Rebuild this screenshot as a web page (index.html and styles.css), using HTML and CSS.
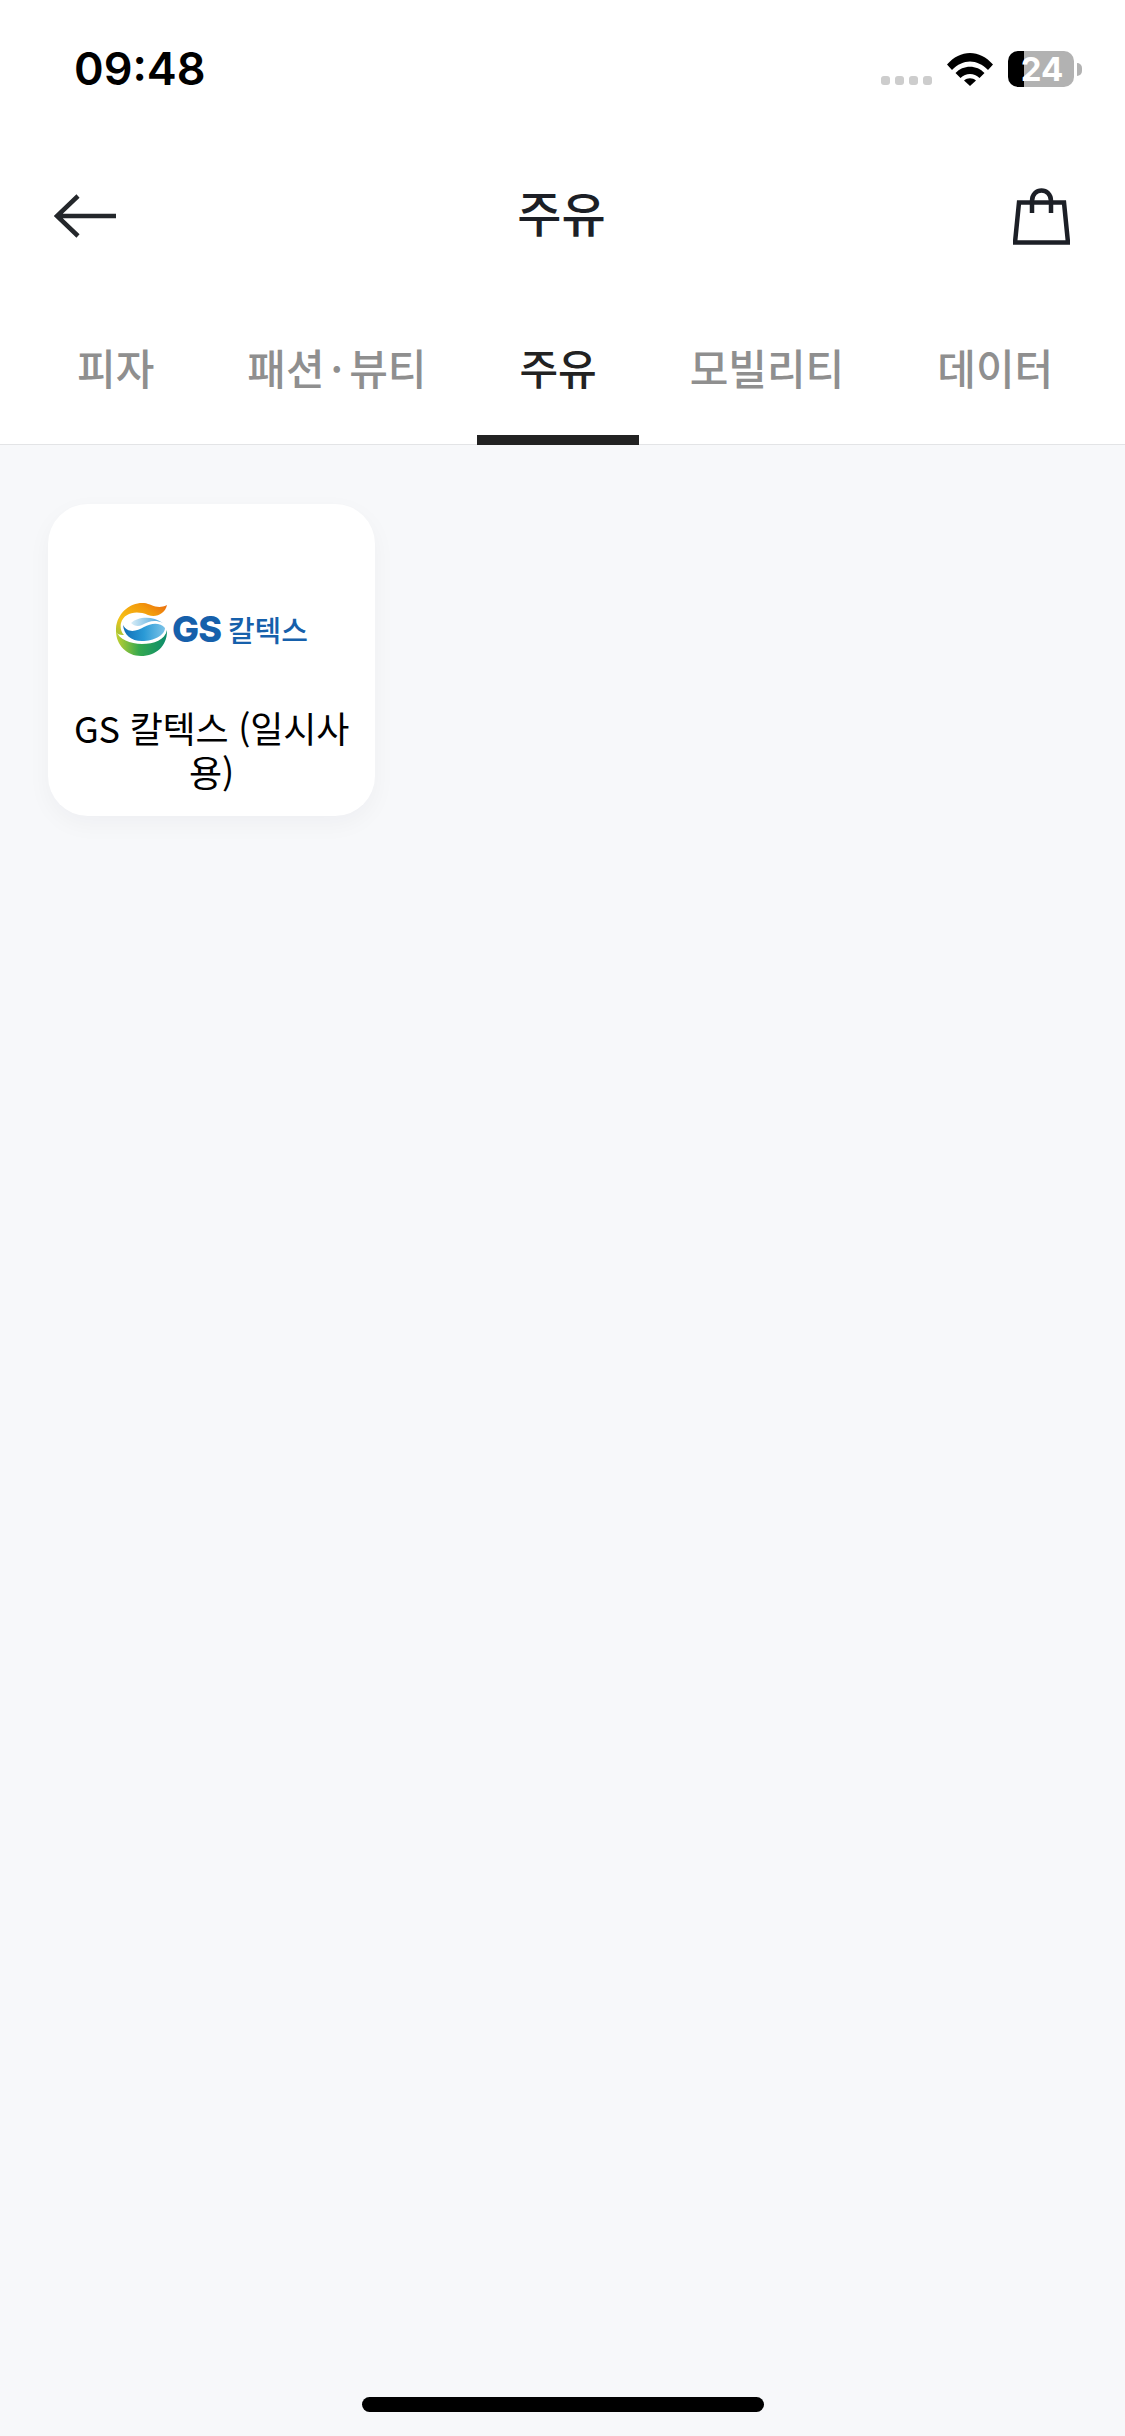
FILE: index.html
```html
<!DOCTYPE html>
<html lang="ko">
<head>
  <meta charset="utf-8">
  <title>주유</title>
  <link rel="stylesheet" href="styles.css">
</head>
<body>
  <div class="screen">
    <div class="status-bar">
      <span class="time">09:48</span>
      <div class="status-icons">
        <div class="signal"><i></i><i></i><i></i><i></i></div>
        <svg class="wifi" width="46" height="34" viewBox="0 0 46 34">
          <path d="M0 12.5 C13 -3 33 -3 46 12.5 L41 18 C30 6.500 16 6.500 5 18 Z" fill="#000"/>
          <path d="M8.500 21 C16 12.500 30 12.500 37.500 21 L32.500 26 C27 20.500 19 20.500 13.500 26 Z" fill="#000"/>
          <path d="M17 28.500 C20.500 25.500 25.500 25.500 29 28.500 L23 34 Z" fill="#000"/>
        </svg>
        <div class="battery">24</div>
        <div class="battery-nub"></div>
      </div>
    </div>

    <header class="top-bar">
      <svg class="back" width="62" height="44" viewBox="0 0 62 44">
        <path d="M24 2 L3 22 L24 42 M3 22 H62" fill="none" stroke="#24272b" stroke-width="4.500"/>
      </svg>
      <h1 class="title">주유</h1>
      <svg class="bag" width="57" height="57" viewBox="0 0 57 57">
        <path d="M6 14.500 H51 L55 54.500 H2 Z" fill="none" stroke="#1c1f26" stroke-width="4.500"/>
        <path d="M19 25 V13 C19 -1 38 -1 38 13 V25" fill="none" stroke="#1c1f26" stroke-width="4.500"/>
      </svg>
    </header>

    <nav class="tabs">
      <a class="tab">피자</a>
      <a class="tab">패션<span class="tab-dot">·</span>뷰티</a>
      <a class="tab active">주유</a>
      <a class="tab">모빌리티</a>
      <a class="tab">데이터</a>
    </nav>

    <main class="content">
      <div class="card">
        <div class="logo">
          <svg class="logo-mark" width="52" height="54" viewBox="0 0 52 54">
            <defs>
              <linearGradient id="topGrad" x1="0" y1="1" x2="1" y2="0">
                <stop offset="0" stop-color="#9cc53a"/>
                <stop offset="0.3" stop-color="#f6c218"/>
                <stop offset="0.7" stop-color="#f39a0c"/>
                <stop offset="1" stop-color="#e8660f"/>
              </linearGradient>
              <linearGradient id="bottomGrad" x1="0" y1="0" x2="1" y2="0">
                <stop offset="0" stop-color="#c3d02f"/>
                <stop offset="0.45" stop-color="#35a94f"/>
                <stop offset="1" stop-color="#0c8c6c"/>
              </linearGradient>
              <linearGradient id="waveGrad" x1="0" y1="0" x2="1" y2="0">
                <stop offset="0" stop-color="#0f6db6"/>
                <stop offset="0.5" stop-color="#2a9ad6"/>
                <stop offset="1" stop-color="#7cc3e8"/>
              </linearGradient>
              <linearGradient id="lightGrad" x1="0" y1="0" x2="1" y2="0">
                <stop offset="0" stop-color="#d8edf7"/>
                <stop offset="1" stop-color="#3f9fd8"/>
              </linearGradient>
            </defs>
            <path d="M0 30 C-1 12 14 0 28 1 C36 2 41 8 51 3 C49 12 40 16 32 13 C20 8 8 11 5 21 C4 25 5 30 8 33 C3 33 1 32 0 30 Z" fill="url(#topGrad)"/>
            <path d="M0 29 C3 37 14 42 26 42 C38 42 49 38 51 28 L51 29 C51 44 40 54 25 54 C11 54 0 43 0 29 Z" fill="url(#bottomGrad)"/>
            <path d="M7 23 C12 32 21 29 28 25 C35 21 44 20 49 26 C49 33 38 39 26 39 C15 39 8 33 7 23 Z" fill="url(#waveGrad)"/>
            <path d="M15 21 C21 15 36 13 47 21 C38 17 32 20 26 23 C22 25 18 24 15 21 Z" fill="url(#lightGrad)"/>
          </svg>
          <span class="logo-gs">GS</span>
          <span class="logo-name">칼텍스</span>
        </div>
        <div class="card-label">GS 칼텍스 (일시사용)</div>
      </div>
    </main>

    <div class="home-bar"></div>
  </div>
</body>
</html>
```

FILE: styles.css
```css
* {
  box-sizing: border-box;
}

body {
  margin: 0;
  font-family: "Noto Sans CJK KR", "Noto Sans", sans-serif;
  background-color: #f7f8fa;
}

.screen {
  position: relative;
  width: 1125px;
  height: 2436px;
  display: flex;
  flex-direction: column;
  overflow: hidden;
}

/* Status bar */
.status-bar {
  height: 136px;
  background-color: #fff;
  display: flex;
  justify-content: space-between;
  padding: 43px 43px 0 74px;
}

.time {
  font-family: Inter, sans-serif;
  font-size: 45px;
  font-weight: 600;
  line-height: 52px;
  color: #000;
}

.status-icons {
  display: flex;
  align-items: flex-start;
  padding-top: 8px;
}

.signal {
  display: flex;
  gap: 5px;
  margin-top: 25px;
  margin-right: 15px;
}

.signal i {
  width: 9px;
  height: 9px;
  border-radius: 3px;
  background-color: #cdcdcd;
}

.wifi {
  margin-top: 1px;
  margin-right: 15px;
}

.battery {
  width: 66px;
  height: 36px;
  border-radius: 10px;
  background: linear-gradient(90deg, #000 16px, #b2b2b2 16px);
  color: #fff;
  font-family: Inter, sans-serif;
  font-size: 33px;
  font-weight: 700;
  line-height: 36px;
  text-align: center;
  padding-left: 2px;
}

.battery-nub {
  width: 5px;
  height: 13px;
  margin-top: 12px;
  margin-left: 3px;
  border-radius: 0 6px 6px 0;
  background-color: #b2b2b2;
}

/* Top bar */
.top-bar {
  height: 154px;
  background-color: #fff;
  display: flex;
  align-items: center;
  justify-content: space-between;
  padding: 6px 55px 0 54px;
}

.title {
  margin: 0 6px 10px 0;
  font-size: 48px;
  font-weight: 500;
  line-height: 60px;
  color: #1c1f26;
}

/* Tabs */
.tabs {
  height: 155px;
  background-color: #fff;
  border-bottom: 1px solid #e3e4e6;
  display: flex;
  gap: 9px;
  padding-left: 35px;
}

.tab {
  padding: 0 42px;
  font-size: 42px;
  font-weight: 500;
  line-height: 154px;
  white-space: nowrap;
  color: #8f8f8f;
  height: 155px;
}

.tab.active {
  color: #222;
  border-bottom: 10px solid #222;
}

.tab-dot {
  margin: 0 6px;
}

/* Content */
.content {
  flex: 1;
  padding: 59px 48px;
}

.card {
  width: 327px;
  height: 312px;
  border-radius: 40px;
  background-color: #fff;
  box-shadow: 0 8px 24px rgba(20, 30, 60, 0.04);
  padding: 98px 20px 0;
}

.logo {
  height: 54px;
  display: flex;
  align-items: center;
  justify-content: center;
  gap: 4px;
  padding-left: 1px;
}

.logo-gs {
  font-family: Inter, sans-serif;
  font-size: 36px;
  font-weight: 800;
  letter-spacing: -1px;
  color: #1660ab;
}

.logo-name {
  margin-left: 3px;
  font-size: 29px;
  font-weight: 500;
  color: #1660ab;
}

.card-label {
  margin-top: 49px;
  font-size: 36px;
  font-weight: 400;
  letter-spacing: -0.2px;
  line-height: 44px;
  text-align: center;
  word-break: break-all;
  color: #000;
}

/* Home indicator */
.home-bar {
  position: absolute;
  left: 362px;
  bottom: 24px;
  width: 402px;
  height: 15px;
  border-radius: 8px;
  background-color: #000;
}
```
